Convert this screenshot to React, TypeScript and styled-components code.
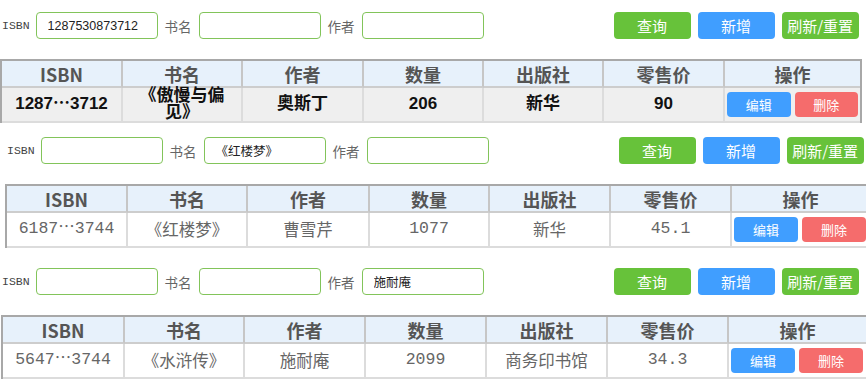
import React from "react"
import styled, { createGlobalStyle } from "styled-components"

const GlobalStyle = createGlobalStyle`
  html, body {
    margin: 0;
    padding: 0;
    background: #fff;
  }
  body {
    width: 866px;
    height: 380px;
    overflow: hidden;
    font-family: "Noto Sans CJK SC", "Liberation Sans", sans-serif;
  }
`

type Book = {
    isbn: string
    name: string
    author: string
    qty: string
    press: string
    price: string
}

type PanelConf = {
    pl: number
    pt: number
    h: number
    gap: number
    tableX: number
    cols: string
    strong: boolean
    filters: [string, string, string]
    book: Book
}

const panels: PanelConf[] = [
    {
        pl: 2,
        pt: 12,
        h: 125,
        gap: 20,
        tableX: 0,
        cols: "121px 120px 121px 120px 120px 121px 135px",
        strong: true,
        filters: ["1287530873712", "", ""],
        book: { isbn: "1287⋯3712", name: "《傲慢与偏见》", author: "奥斯丁", qty: "206", press: "新华", price: "90" },
    },
    {
        pl: 7,
        pt: 12,
        h: 130,
        gap: 20,
        tableX: 5,
        cols: "121px 120px 122px 120px 121px 121px 137px",
        strong: false,
        filters: ["", "《红楼梦》", ""],
        book: { isbn: "6187⋯3744", name: "《红楼梦》", author: "曹雪芹", qty: "1077", press: "新华", price: "45.1" },
    },
    {
        pl: 2,
        pt: 13,
        h: 125,
        gap: 20,
        tableX: 1,
        cols: "122px 120px 121px 121px 121px 121px 137px",
        strong: false,
        filters: ["", "", "施耐庵"],
        book: { isbn: "5647⋯3744", name: "《水浒传》", author: "施耐庵", qty: "2099", press: "商务印书馆", price: "34.3" },
    },
]

const headers = ["ISBN", "书名", "作者", "数量", "出版社", "零售价", "操作"]

export default function App() {
    return (
        <>
            <GlobalStyle />
            {panels.map((p, i) => (
                <Panel key={i} $pt={p.pt} $h={p.h}>
                    <Toolbar $pl={p.pl}>
                        <IsbnLabel>ISBN</IsbnLabel>
                        <Field value={p.filters[0]} readOnly />
                        <Label>书名</Label>
                        <Field value={p.filters[1]} readOnly />
                        <Label>作者</Label>
                        <Field value={p.filters[2]} readOnly />
                        <Buttons>
                            <Button $color="#67c23a">查询</Button>
                            <Button $color="#409eff">新增</Button>
                            <Button $color="#67c23a">刷新/重置</Button>
                        </Buttons>
                    </Toolbar>
                    <Table $gap={p.gap} $x={p.tableX} $cols={p.cols}>
                        {headers.map((h) => (
                            <HeadCell key={h}>{h}</HeadCell>
                        ))}
                        <Cell $strong={p.strong} $mono $nowrap>{p.book.isbn}</Cell>
                        <Cell $strong={p.strong}>{p.book.name}</Cell>
                        <Cell $strong={p.strong}>{p.book.author}</Cell>
                        <Cell $strong={p.strong} $mono>{p.book.qty}</Cell>
                        <Cell $strong={p.strong}>{p.book.press}</Cell>
                        <Cell $strong={p.strong} $mono>{p.book.price}</Cell>
                        <ActionCell $strong={p.strong}>
                            <SmallButton $color="#409eff">编辑</SmallButton>
                            <SmallButton $color="#f56c6c">删除</SmallButton>
                        </ActionCell>
                    </Table>
                </Panel>
            ))}
        </>
    )
}

const Panel = styled("div")<{ $pt: number; $h: number }>`
    height: ${(p) => p.$h}px;
    padding-top: ${(p) => p.$pt}px;
    box-sizing: border-box;
    overflow: hidden;
`
const Toolbar = styled("div")<{ $pl: number }>`
    display: flex;
    align-items: center;
    height: 27px;
    padding-left: ${(p) => p.$pl}px;
    white-space: nowrap;
`
const IsbnLabel = styled("span")`
    font-family: "Liberation Mono", monospace;
    font-size: 11.5px;
    color: #444;
    padding-right: 6px;
`
const Label = styled("span")`
    font-size: 13.5px;
    color: #666;
    padding: 0 7px 0 7px;
`
const Field = styled("input")`
    width: 122px;
    height: 27px;
    box-sizing: border-box;
    border: 1px solid #82c45a;
    border-radius: 4px;
    padding: 0 11px;
    font-family: "Liberation Sans", "Noto Sans CJK SC", sans-serif;
    font-size: 12.5px;
    color: #222;
    outline: none;
    background: #fff;
`
const Buttons = styled("div")`
    display: flex;
    gap: 7px;
    margin-left: 130px;
`
const Button = styled("button")<{ $color: string }>`
    width: 77px;
    height: 27px;
    border: none;
    border-radius: 4px;
    background: ${(p) => p.$color};
    color: #fff;
    font-family: "Noto Sans CJK SC", sans-serif;
    font-size: 15px;
    padding: 0;
`
const Table = styled("div")<{ $gap: number; $x: number; $cols: string }>`
    display: grid;
    grid-template-columns: ${(p) => p.$cols};
    width: max-content;
    margin-top: ${(p) => p.$gap}px;
    margin-left: ${(p) => p.$x}px;
    border: 2px solid #a8a8a8;
    border-bottom: none;
`
const HeadCell = styled("div")`
    height: 27px;
    display: flex;
    align-items: center;
    justify-content: center;
    background: #e7f1fb;
    border-right: 2px solid #c6c6c6;
    border-bottom: 2px solid #cdcdcd;
    box-sizing: border-box;
    font-family: "Noto Sans CJK SC", sans-serif;
    font-weight: 700;
    font-size: 18px;
    color: #555;
    &:nth-child(7) {
        border-right: none;
    }
`
const Cell = styled("div")<{ $strong: boolean; $mono?: boolean; $nowrap?: boolean }>`
    height: 35px;
    box-sizing: border-box;
    display: flex;
    align-items: center;
    justify-content: center;
    text-align: center;
    padding: 0 12px;
    line-height: 16.5px;
    white-space: ${(p) => (p.$nowrap ? "nowrap" : "normal")};
    background: ${(p) => (p.$strong ? "#efefef" : "#fff")};
    border-right: 2px solid #dcdcdc;
    border-bottom: 2px solid #dcdcdc;
    color: ${(p) => (p.$strong ? "#111" : "#666")};
    font-weight: ${(p) => (p.$strong ? 700 : 400)};
    font-size: ${(p) => (p.$strong ? 17 : 16.5)}px;
    font-family: ${(p) =>
        p.$strong
            ? `"Liberation Sans", "Noto Sans CJK SC", sans-serif`
            : p.$mono
            ? `"Liberation Mono", "Noto Sans CJK SC", monospace`
            : `"Noto Sans CJK SC", sans-serif`};
`
const ActionCell = styled("div")<{ $strong: boolean }>`
    height: 35px;
    box-sizing: border-box;
    display: flex;
    align-items: center;
    gap: 4px;
    padding: 0 2px;
    background: ${(p) => (p.$strong ? "#efefef" : "#fff")};
    border-bottom: 2px solid #dcdcdc;
`
const SmallButton = styled("button")<{ $color: string }>`
    width: 64px;
    height: 25px;
    border: none;
    border-radius: 4px;
    background: ${(p) => p.$color};
    color: #fff;
    font-family: "Noto Sans CJK SC", sans-serif;
    font-size: 13px;
    padding: 0;
`
